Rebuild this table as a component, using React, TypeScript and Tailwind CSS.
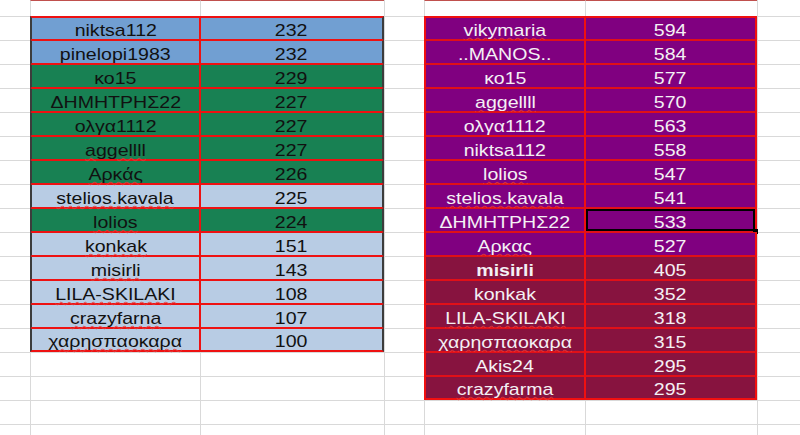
import React from "react";
import clsx from "clsx";

type Row = { name: string; value: string; bg: string; wavy?: boolean; bold?: boolean };

const BLUE = "bg-[#719fd2]";
const LIGHT = "bg-[#b8cce4]";
const GREEN = "bg-[#188153]";
const PURPLE = "bg-[#800080]";
const MAROON = "bg-[#87133f]";

const left: Row[] = [
  { name: "niktsa112", value: "232", bg: BLUE },
  { name: "pinelopi1983", value: "232", bg: BLUE },
  { name: "κο15", value: "229", bg: GREEN },
  { name: "ΔΗΜΗΤΡΗΣ22", value: "227", bg: GREEN },
  { name: "ολγα1112", value: "227", bg: GREEN },
  { name: "aggellll", value: "227", bg: GREEN, wavy: true },
  { name: "Αρκάς", value: "226", bg: GREEN, wavy: true },
  { name: "stelios.kavala", value: "225", bg: LIGHT, wavy: true },
  { name: "lolios", value: "224", bg: GREEN, wavy: true },
  { name: "konkak", value: "151", bg: LIGHT, wavy: true },
  { name: "misirli", value: "143", bg: LIGHT, wavy: true },
  { name: "LILA-SKILAKI", value: "108", bg: LIGHT, wavy: true },
  { name: "crazyfarna", value: "107", bg: LIGHT, wavy: true },
  { name: "χαρησπαοκαρα", value: "100", bg: LIGHT, wavy: true },
];

const right: Row[] = [
  { name: "vikymaria", value: "594", bg: PURPLE, wavy: true },
  { name: "..MANOS..", value: "584", bg: PURPLE },
  { name: "κο15", value: "577", bg: PURPLE },
  { name: "aggellll", value: "570", bg: PURPLE, wavy: true },
  { name: "ολγα1112", value: "563", bg: PURPLE },
  { name: "niktsa112", value: "558", bg: PURPLE },
  { name: "lolios", value: "547", bg: PURPLE, wavy: true },
  { name: "stelios.kavala", value: "541", bg: PURPLE, wavy: true },
  { name: "ΔΗΜΗΤΡΗΣ22", value: "533", bg: PURPLE },
  { name: "Αρκας", value: "527", bg: PURPLE, wavy: true },
  { name: "misirli", value: "405", bg: MAROON, bold: true },
  { name: "konkak", value: "352", bg: MAROON },
  { name: "LILA-SKILAKI", value: "318", bg: MAROON, wavy: true },
  { name: "χαρησπαοκαρα", value: "315", bg: MAROON, wavy: true },
  { name: "Akis24", value: "295", bg: MAROON },
  { name: "crazyfarma", value: "295", bg: MAROON, wavy: true },
];

const ROWS = 19;
const COLS = 7;

function Text({ children, wavy, bold, light }: { children: React.ReactNode; wavy?: boolean; bold?: boolean; light?: boolean }) {
  return (
    <span
      className={clsx(
        "inline-block origin-center scale-x-[1.15] whitespace-nowrap text-[17px] leading-[17px]",
        light ? "text-[#f4f0f4]" : "text-[#111111]",
        bold && "font-bold",
        wavy && "underline decoration-wavy decoration-[#e23a3a]/80 decoration-[0.5px] underline-offset-[1px]"
      )}
    >
      {children}
    </span>
  );
}

function Cell({ r, c }: { r: number; c: number }) {
  // Left table
  if ((c === 1 || c === 2) && r >= 1 && r <= left.length) {
    const row = left[r - 1];
    return (
      <div
        className={clsx(
          "flex items-end justify-center",
          row.bg,
          c === 1
            ? "border-l-2 border-l-[#3c3c3c] border-r border-r-[#ee1111]"
            : "border-l border-l-[#ee1111] border-r-2 border-r-[#3c3c3c]",
          r === 1 ? "border-t-2 border-t-[#ee1111]" : "border-t border-t-[#ee1111]",
          r === left.length ? "border-b-2 border-b-[#ee1111]" : "border-b border-b-[#ee1111]"
        )}
      >
        {c === 1 ? (
          <Text wavy={row.wavy}>{row.name}</Text>
        ) : (
          <Text>{row.value}</Text>
        )}
      </div>
    );
  }
  // Right table
  if ((c === 4 || c === 5) && r >= 1 && r <= right.length) {
    const row = right[r - 1];
    const selected = c === 5 && r === 9;
    return (
      <div
        className={clsx(
          "relative flex items-end justify-center",
          row.bg,
          c === 4
            ? "border-l-2 border-l-[#f01010] border-r border-r-[#f01010]"
            : "border-l border-l-[#f01010] border-r-2 border-r-[#f01010]",
          r === 1 ? "border-t-2 border-t-[#f01010]" : "border-t border-t-[#e01018]",
          r === right.length ? "border-b-2 border-b-[#f01010]" : "border-b border-b-[#e01018]"
        )}
      >
        {c === 4 ? (
          <Text wavy={row.wavy} bold={row.bold} light>
            {row.name}
          </Text>
        ) : (
          <Text light>{row.value}</Text>
        )}
        {selected && (
          <>
            <div className="pointer-events-none absolute inset-0 border-2 border-black" />
            <div className="absolute -bottom-[3px] -right-[3px] h-[5px] w-[5px] bg-black" />
          </>
        )}
      </div>
    );
  }
  // Plain spreadsheet cell
  const tableTopCol = c === 1 || c === 2 || c === 4 || c === 5;
  return (
    <div
      className={clsx(
        "bg-white",
        r === 0 && tableTopCol && "border-t border-t-[#c0504d]",
        r > 0 && "border-t border-t-[#d9d9d9]",
        c > 0 && "border-l border-l-[#d9d9d9]"
      )}
    />
  );
}

export default function App() {
  const cells: React.ReactNode[] = [];
  for (let r = 0; r < ROWS; r++) {
    for (let c = 0; c < COLS; c++) {
      cells.push(<Cell key={`${r}-${c}`} r={r} c={c} />);
    }
  }
  return (
    <div className="h-[435px] w-[800px] overflow-hidden bg-white font-['Liberation_Sans',Arial,sans-serif]">
      <div className="grid grid-cols-[30px_170px_184px_40px_161px_172px_43px] grid-rows-[16px_repeat(18,24px)]">
        {cells}
      </div>
    </div>
  );
}
